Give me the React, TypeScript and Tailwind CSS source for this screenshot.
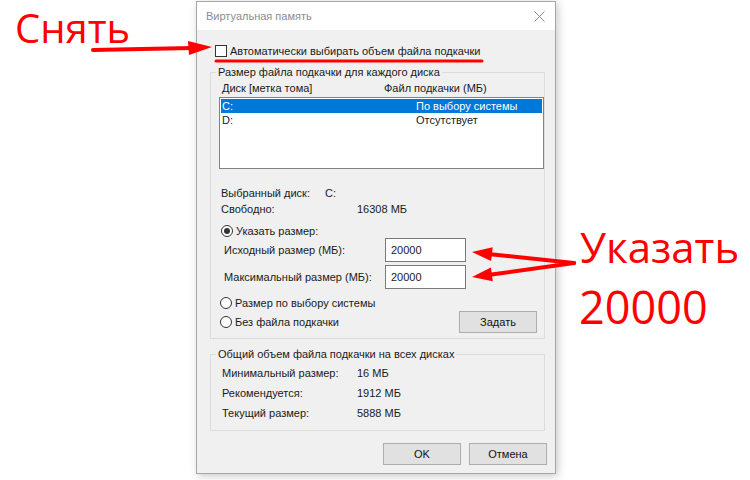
import React from "react";

function Radio({ checked }: { checked?: boolean }) {
  return (
    <span className="w-[12px] h-[12px] rounded-full border border-[#333333] bg-white flex items-center justify-center shrink-0">
      {checked && <span className="w-[6px] h-[6px] rounded-full bg-[#333333]" />}
    </span>
  );
}

function Btn({ children, w }: { children: React.ReactNode; w: string }) {
  return (
    <div className={`${w} h-[22px] bg-[#e1e1e1] border border-[#adadad] flex items-center justify-center text-[11px] text-[#111]`}>
      {children}
    </div>
  );
}

export default function App() {
  return (
    <div className="relative w-[750px] h-[480px] bg-white overflow-hidden font-['Liberation_Sans',Arial,sans-serif] text-[11px] text-[#1a1a1a] whitespace-nowrap">
      <div className="ml-[196px] pt-[1px]">
        <div className="w-[360px] h-[473px] border border-[#a6a6a6] shadow-[2px_2px_8px_rgba(0,0,0,0.22)] bg-[#f0f0f0] flex flex-col">
          {/* title bar */}
          <div className="h-[28px] bg-white flex items-center justify-between pl-[9px] pr-[8px] shrink-0">
            <span className="text-[#8c8c8c] text-[11px]">Виртуальная память</span>
            <svg width="11" height="11" viewBox="0 0 11 11" className="mr-[2px]">
              <path d="M0.5 0.5 L10.5 10.5 M10.5 0.5 L0.5 10.5" stroke="#8a8a8a" strokeWidth="1" />
            </svg>
          </div>

          {/* body */}
          <div className="flex flex-col pl-[13px]">
            <div className="mt-[13px] h-[16px] flex items-center ml-[5px]">
              <span className="w-[12px] h-[12px] border border-[#333333] bg-white shrink-0" />
              <span className="ml-[3px]">Автоматически выбирать объем файла подкачки</span>
            </div>

            <fieldset className="mt-[5px] w-[335px] border border-[#dcdcdc]">
              <legend className="ml-[5px] px-[2px] h-[16px] leading-[16px]">Размер файла подкачки для каждого диска</legend>
              <div className="flex flex-col pb-[5px]">
                <div className="h-[16px] flex items-center pl-[11px]">
                  <span className="w-[162px]">Диск [метка тома]</span>
                  <span>Файл подкачки (МБ)</span>
                </div>
                <div className="mt-[1px] ml-[8px] w-[325px] h-[72px] bg-white border border-[#828282] p-[1px] flex flex-col">
                  <div className="h-[14px] bg-[#0078d7] text-white flex items-center pl-[1px]">
                    <span className="w-[194px]">C:</span>
                    <span>По выбору системы</span>
                  </div>
                  <div className="h-[14px] flex items-center pl-[1px]">
                    <span className="w-[194px]">D:</span>
                    <span>Отсутствует</span>
                  </div>
                </div>
                <div className="mt-[16px] h-[16px] flex items-center pl-[10px]">
                  <span className="w-[104px]">Выбранный диск:</span>
                  <span>C:</span>
                </div>
                <div className="h-[16px] flex items-center pl-[10px]">
                  <span className="w-[136px]">Свободно:</span>
                  <span>16308 МБ</span>
                </div>
                <div className="mt-[7px] h-[14px] flex items-center pl-[10px]">
                  <Radio checked />
                  <span className="ml-[3px]">Указать размер:</span>
                </div>
                <div className="h-[24px] flex items-center pl-[13px]">
                  <span className="w-[161px]">Исходный размер (МБ):</span>
                  <div className="w-[81px] h-[24px] bg-white border border-[#7a7a7a] flex items-center pl-[5px]">20000</div>
                </div>
                <div className="mt-[3px] h-[24px] flex items-center pl-[13px]">
                  <span className="w-[161px]">Максимальный размер (МБ):</span>
                  <div className="w-[81px] h-[24px] bg-white border border-[#7a7a7a] flex items-center pl-[5px]">20000</div>
                </div>
                <div className="mt-[7px] h-[14px] flex items-center pl-[9px]">
                  <Radio />
                  <span className="ml-[3px]">Размер по выбору системы</span>
                </div>
                <div className="mt-[1px] h-[22px] flex items-center pl-[9px]">
                  <Radio />
                  <span className="ml-[3px]">Без файла подкачки</span>
                  <div className="ml-auto mr-[7px]">
                    <Btn w="w-[78px]">Задать</Btn>
                  </div>
                </div>
              </div>
            </fieldset>

            <fieldset className="mt-[7px] w-[335px] border border-[#dcdcdc]">
              <legend className="ml-[5px] px-[2px] h-[16px] leading-[16px]">Общий объем файла подкачки на всех дисках</legend>
              <div className="flex flex-col pt-[1px] pb-[7px] pl-[11px]">
                <div className="h-[20px] flex items-center">
                  <span className="w-[135px]">Минимальный размер:</span>
                  <span>16 МБ</span>
                </div>
                <div className="h-[20px] flex items-center">
                  <span className="w-[135px]">Рекомендуется:</span>
                  <span>1912 МБ</span>
                </div>
                <div className="h-[20px] flex items-center">
                  <span className="w-[135px]">Текущий размер:</span>
                  <span>5888 МБ</span>
                </div>
              </div>
            </fieldset>

            <div className="mt-[12px] flex justify-end gap-[8px] pr-[8px]">
              <Btn w="w-[78px]">OK</Btn>
              <Btn w="w-[78px]">Отмена</Btn>
            </div>
          </div>
        </div>
      </div>

      {/* annotations */}
      <div className="absolute left-[15px] top-[3px] text-[40px] leading-[1.25] text-[#ff0000] font-['Open_Sans',sans-serif]">Снять</div>
      <div className="absolute left-[580px] top-[220px] text-[42px] leading-[1.3] text-[#ff0000] font-['Open_Sans',sans-serif]">Указать</div>
      <div className="absolute left-[579px] top-[279px] text-[45px] leading-[1.25] text-[#ff0000] font-['Open_Sans',sans-serif]">20000</div>
      <svg className="absolute inset-0 pointer-events-none" width="750" height="480" viewBox="0 0 750 480">
        <line x1="93" y1="50" x2="192" y2="48" stroke="#ff0000" strokeWidth="4" strokeLinecap="round" />
        <polygon points="212,47 188,41 189,55" fill="#ff0000" />
        <line x1="216" y1="61" x2="482" y2="61" stroke="#ff0000" strokeWidth="3" strokeLinecap="round" />
        <line x1="574" y1="263" x2="488" y2="254" stroke="#ff0000" strokeWidth="4" strokeLinecap="round" />
        <polygon points="472,252 491.1,261.1 492.7,247.2" fill="#ff0000" />
        <line x1="574" y1="263" x2="488" y2="275" stroke="#ff0000" strokeWidth="4" strokeLinecap="round" />
        <polygon points="472,277 492.8,281.2 490.9,267.4" fill="#ff0000" />
      </svg>
    </div>
  );
}
